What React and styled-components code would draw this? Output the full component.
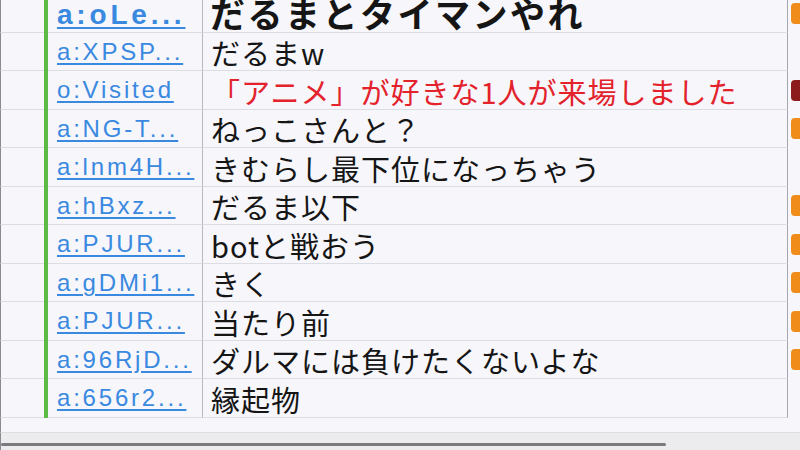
import React from "react";
import styled, { createGlobalStyle } from "styled-components";

const GlobalStyles = createGlobalStyle`
  html, body {
    margin: 0;
    padding: 0;
    background: #f6f6fb;
    overflow: hidden;
  }
`;

const Viewer = styled.div`
  width: 800px;
  height: 450px;
  display: flex;
  flex-direction: column;
  overflow: hidden;
  background: #f6f6fb;
`;

const List = styled.div`
  margin-top: -6px;
  display: flex;
  flex-direction: column;
`;

const Row = styled.div`
  display: grid;
  grid-template-columns: 44px 4px 155px 585px 1fr;
  height: 38.5px;
`;

const Blank = styled.div`
  border-left: 1px solid #8a8a90;
  border-bottom: 1px solid #dcdce3;
`;

const Bar = styled.div`
  background: #5cbb45;
`;

const Name = styled.div`
  display: flex;
  align-items: center;
  min-width: 0;
  padding-left: 9px;
  padding-top: ${p => (p.big ? "4px" : "1px")};
  border-right: 1px solid #b9b9c0;
  border-bottom: 1px solid #dcdce3;
  white-space: nowrap;

  a {
    font-family: "Liberation Sans", Arial, sans-serif;
    font-size: ${p => (p.big ? "28px" : "24px")};
    line-height: 30px;
    letter-spacing: ${p => (p.big ? "3.8px" : "2.8px")};
    font-weight: ${p => (p.big ? 700 : 400)};
    color: #3a89e0;
    text-decoration: underline;
    text-decoration-thickness: 2px;
    text-underline-offset: 3px;
  }
`;

const Comment = styled.div`
  display: flex;
  align-items: center;
  min-width: 0;
  padding-left: ${p => (p.big ? "7px" : "8px")};
  padding-top: ${p => (p.big ? "0px" : "3px")};
  border-right: 1px solid #a6a6ae;
  border-bottom: 1px solid #dcdce3;
  white-space: nowrap;
  font-family: "Noto Sans CJK JP", "Noto Sans", sans-serif;
  font-size: ${p => (p.big ? "35px" : "29px")};
  line-height: ${p => (p.big ? "36px" : "33px")};
  letter-spacing: ${p => (p.big ? "2.5px" : "1px")};
  font-weight: ${p => (p.big ? 700 : 400)};
  color: ${p => (p.red ? "#e3222c" : "#151515")};
`;

const MarkCell = styled.div`
  display: flex;
  align-items: center;
  padding-left: 3px;
`;

const Mark = styled.div`
  width: 12px;
  height: 21px;
  border-radius: 4px;
  background: ${p => (p.kind === "visit" ? "#8c1c1c" : "#f08c1a")};
`;

const Spacer = styled.div`
  height: 14px;
  border-left: 1px solid #8a8a90;
  border-bottom: 1px solid #dedee2;
`;

const HScroll = styled.div`
  flex: 1;
  background: #ececee;
  padding-top: 10px;
  border-left: 1px solid #8a8a90;
`;

const Thumb = styled.div`
  width: 665px;
  height: 3px;
  border-radius: 2px;
  background: #7a7a7e;
`;

const rows = [
  { name: "a:oLe...", text: "だるまとタイマンやれ", big: true, mark: "orange" },
  { name: "a:XPSP...", text: "だるまw" },
  { name: "o:Visited", text: "「アニメ」が好きな1人が来場しました", red: true, mark: "visit" },
  { name: "a:NG-T...", text: "ねっこさんと？", mark: "orange" },
  { name: "a:lnm4H...", text: "きむらし最下位になっちゃう" },
  { name: "a:hBxz...", text: "だるま以下", mark: "orange" },
  { name: "a:PJUR...", text: "botと戦おう", mark: "orange" },
  { name: "a:gDMi1...", text: "きく", mark: "orange" },
  { name: "a:PJUR...", text: "当たり前", mark: "orange" },
  { name: "a:96RjD...", text: "ダルマには負けたくないよな", mark: "orange" },
  { name: "a:656r2...", text: "縁起物" },
];

const App = () => {
  return (
    <Viewer>
      <GlobalStyles />
      <List>
        {rows.map((r, i) => (
          <Row key={i}>
            <Blank />
            <Bar />
            <Name big={r.big}>
              <a href="#">{r.name}</a>
            </Name>
            <Comment big={r.big} red={r.red}>
              {r.text}
            </Comment>
            <MarkCell>{r.mark && <Mark kind={r.mark} />}</MarkCell>
          </Row>
        ))}
      </List>
      <Spacer />
      <HScroll>
        <Thumb />
      </HScroll>
    </Viewer>
  );
};

export default App;
